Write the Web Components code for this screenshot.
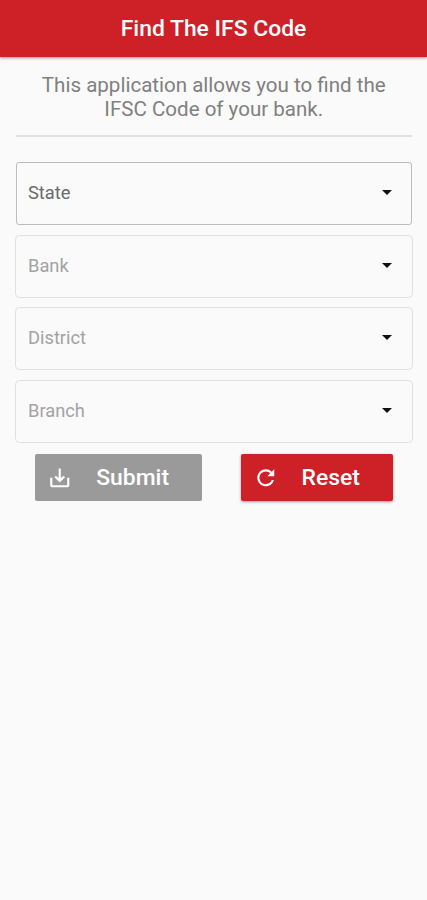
<!DOCTYPE html>
<html lang="en">
<head>
<meta charset="utf-8">
<title>Find The IFS Code</title>
<style>
html, body { margin: 0; height: 100%; background: #fafafa; }
body { font-family: Roboto, "Liberation Sans", sans-serif; overflow: hidden; }
</style>
</head>
<body>
<ifsc-app></ifsc-app>
<script>
const define = (name, html) => customElements.define(name, class extends HTMLElement {
  constructor() {
    super();
    const t = document.createElement('template');
    t.innerHTML = html;
    this.attachShadow({ mode: 'open' }).append(t.content.cloneNode(true));
  }
});

define('app-bar', `
<style>
:host { display: flex; align-items: center; justify-content: center; height: 57px; box-sizing: border-box;
  background: #ce2027; color: #fff; font-size: 22.9px; font-weight: 500; line-height: 26px;
  box-shadow: 0 1px 3px rgba(0,0,0,.4); }
</style><slot></slot>`);

define('intro-text', `
<style>
:host { display: block; text-align: center; color: #808080; font-size: 20.55px; line-height: 24px;
  padding: 15.5px 10px 14px; height: 80px; box-sizing: border-box; border-bottom: 2px solid #e0e0e0; }
</style><slot></slot>`);

define('select-field', `
<style>
:host { display: flex; align-items: center; justify-content: space-between; height: 63px; box-sizing: border-box;
  border: 1.5px solid #e0e0e0; border-radius: 4.5px; padding: 0 20px 2px 12px; margin: 0 -1px;
  color: #a3a3a3; font-size: 18.3px; }
:host([active]) { border-color: #bcbcbc; border-radius: 3px; color: #6a6a6a; margin: 0; padding: 0 19px 2px 11px; }
svg { display: block; width: 10px; height: 5px; }
</style><slot></slot><svg viewBox="0 0 10 5"><path d="M0 0h10L5 5z" fill="#111"/></svg>`);

define('icon-button', `
<style>
:host { display: flex; align-items: center; height: 47px; box-sizing: border-box; border-radius: 2px; padding-left: 12px;
  background: #9a9a9a; color: #fff; font-size: 22.9px; font-weight: 500; }
:host([primary]) { background: #ce2027; box-shadow: 0 1px 3px rgba(0,0,0,.38); }
.label { margin-left: 23.5px; }
</style><slot name="icon"></slot><span class="label"><slot></slot></span>`);

define('ifsc-app', `
<style>
:host { display: block; }
main { padding: 0 15.5px 0 16px; }
.fields { display: grid; gap: 9.5px; margin-top: 25px; }
.actions { display: flex; gap: 38.4px; margin: 11.5px 0 0 19.2px; }
.submit { width: 167px; }
.reset { width: 152px; }
svg { display: block; width: 25.5px; height: 25.5px; }
</style>
<app-bar>Find The IFS Code</app-bar>
<main>
<intro-text>This application allows you to find the<br>IFSC Code of your bank.</intro-text>
<div class="fields">
<select-field active>State</select-field>
<select-field>Bank</select-field>
<select-field>District</select-field>
<select-field>Branch</select-field>
</div>
<div class="actions">
<icon-button class="submit"><svg slot="icon" viewBox="0 0 24 24" fill="#fff"><path d="M19 12v7H5v-7H3v7c0 1.1.9 2 2 2h14c1.1 0 2-.9 2-2v-7zM13 12.2l2.59-2.11L17 11.5l-5 5-5-5 1.41-1.41L11 12.2V3.2h2z"/></svg>Submit</icon-button>
<icon-button class="reset" primary><svg slot="icon" viewBox="0 0 24 24" fill="#fff"><path d="M17.65 6.35A7.96 7.96 0 0 0 12 4a8 8 0 1 0 7.73 10h-2.08A6 6 0 1 1 12 6c1.66 0 3.14.69 4.22 1.78L13.5 10.7H20V4z"/></svg>Reset</icon-button>
</div>
</main>`);
</script>
</body>
</html>
